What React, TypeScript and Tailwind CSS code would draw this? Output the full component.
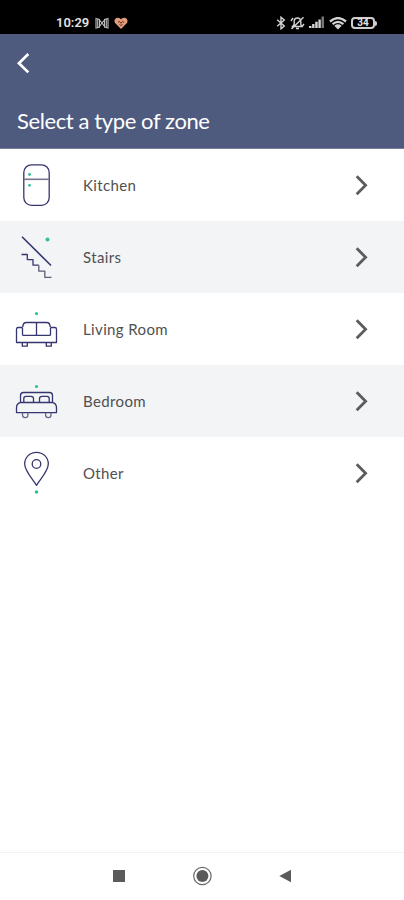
import type { ReactNode } from "react";

const NAVY = "#35356f";
const TEAL = "#2fbf9b";

function Icon({ children }: { children: ReactNode }) {
  return (
    <svg
      width="72"
      height="72"
      viewBox="0 0 72 72"
      fill="none"
      stroke={NAVY}
      strokeWidth="1.3"
      strokeLinejoin="round"
      className="shrink-0"
    >
      {children}
    </svg>
  );
}

function Dot({ x, y, r = 1.6 }: { x: number; y: number; r?: number }) {
  return <circle cx={x} cy={y} r={r} fill={TEAL} stroke="none" />;
}

const ZONES = [
  {
    name: "Kitchen",
    icon: (
      <Icon>
        <rect x="23.8" y="15.8" width="25.4" height="40.6" rx="7.8" />
        <path d="M24 30.3H49" stroke="#77778f" strokeWidth="1.6" />
        <Dot x={29.5} y={25.5} r={1.4} />
        <Dot x={29.5} y={36.3} r={1.4} />
      </Icon>
    ),
  },
  {
    name: "Stairs",
    icon: (
      <Icon>
        <path d="M22 15.7L51 44.5" strokeWidth="1.6" />
        <path d="M21.5 33.5H27.3V38.6H33V44.2H38.8" />
        <path d="M38.8 44.2V50.2H44.8V56.3H51.5" stroke="#5c5c78" />
        <Dot x={47.5} y={18.5} r={2} />
      </Icon>
    ),
  },
  {
    name: "Living Room",
    icon: (
      <Icon>
        <path d="M22.5 42.3V34.5M50.5 42.3V34.5M22.5 42.3H50.5M22.8 34C22.8 31 24 29.5 26.5 29.5H46.5C49 29.5 50.2 31 50.2 34" />
        <path d="M36.5 29.5V42.3" />
        <path d="M22.5 34.5H18.2Q16.5 34.5 16.5 36.2V49.5H56.5V36.2Q56.5 34.5 54.8 34.5H50.5" />
        <path d="M22.3 49.5V53.2H27.3V49.5M46.3 49.5V53.2H51.3V49.5" />
        <Dot x={36.5} y={20.6} />
      </Icon>
    ),
  },
  {
    name: "Bedroom",
    icon: (
      <Icon>
        <path d="M20.5 37.5V30.5Q20.5 27.5 23.5 27.5H49.5Q52.5 27.5 52.5 30.5V37.5" />
        <path d="M23.8 37.5V33.5Q23.8 31.3 26 31.3H31Q33.5 31.3 33.5 33.5V37.5M39.5 37.5V33.5Q39.5 31.3 42 31.3H47Q49.2 31.3 49.2 33.5V37.5" />
        <path d="M20 37.5H53Q56.5 38.5 56.5 43V47.6H16.5V43Q16.5 38.5 20 37.5Z" />
        <path
          d="M22.5 47.8V50Q22.5 52.6 25.2 52.6T27.9 50V47.8M45.6 47.8V50Q45.6 52.6 48.3 52.6T51 50V47.8"
          stroke="#66668a"
        />
        <Dot x={36.5} y={21.5} />
      </Icon>
    ),
  },
  {
    name: "Other",
    icon: (
      <Icon>
        <path d="M36.5 48.3C33 42.5 24.7 34 24.7 27C24.7 20.3 29.8 15.3 36.5 15.3S48.3 20.3 48.3 27C48.3 34 40 42.5 36.5 48.3Z" />
        <circle cx="36.5" cy="27" r="4.3" />
        <Dot x={36.5} y={55} r={1.8} />
      </Icon>
    ),
  },
];

function StatusBar() {
  return (
    <div className="flex h-[34px] items-start bg-black pt-[14px] text-[#e2e2e2]">
      <span className="ml-[56px] w-[34px] whitespace-nowrap font-['Roboto',sans-serif] text-[13px] font-semibold leading-[18px]">
        10:29
      </span>
      <svg width="14" height="12" viewBox="0 0 14 12" fill="none" stroke="#bdbdbd" strokeWidth="1.1" className="ml-[5px] mt-[3px]">
        <path d="M1 1.5L4.5 2.5V10L1 11ZM13 1.5L9.5 2.5V10L13 11ZM4.5 3L7 6L9.5 3M4.5 9.5L7 6L9.5 9.5M2.7 2V10.5M11.3 2V10.5" />
      </svg>
      <svg width="14" height="13" viewBox="0 0 14 13" className="ml-[5px] mt-[3px]">
        <path
          d="M7 12L1.3 6.3C-.5 4 .8 .7 3.8 .7C5.3 .7 6.3 1.5 7 2.5C7.7 1.5 8.7 .7 10.2 .7C13.2 .7 14.5 4 12.7 6.3Z"
          fill="#e29b7b"
        />
        <path d="M4 5.3L5.5 4.5L7 6.3L8.500 4.500L10 5.300M5.500 7.500L7 8.500L8.500 7.500" fill="none" stroke="#5b3429" />
      </svg>
      <svg width="10" height="14" viewBox="0 0 10 14" fill="none" stroke="#d4d4d4" strokeWidth="1.4" className="ml-[148px] mt-[2px]">
        <path d="M1.2 3.8L8.3 10L5 12.8V1.2L8.3 4L1.2 10.2" />
      </svg>
      <svg width="15" height="14" viewBox="0 0 15 14" fill="none" stroke="#d4d4d4" strokeWidth="1.4" className="ml-[4px] mt-[2px]">
        <path d="M2.5 10.5H12L10.8 8.5V5.5C10.8 3.2 9.5 2 7.5 2S4.2 3.2 4.2 5.5V8.5ZM6 12.5H9M1.5 13L13.5 1.2M1 5L3 2M14 8L12.5 10" />
      </svg>
      <svg width="15" height="12" viewBox="0 0 15 12" className="ml-[4px] mt-[2px]" fill="#d4d4d4">
        <path d="M0 10H2.500V12H0ZM3.100 8H5.500V12H3.100ZM6.200 5.800H8.700V12H6.200ZM9.400 3.500H11.800V12H9.400Z" />
        <path d="M12.500 .5H15V12H12.500Z" fill="#777" />
      </svg>
      <svg width="18" height="13" viewBox="0 0 18 13" fill="none" stroke="#d4d4d4" strokeWidth="2.3" className="ml-[5px] mt-[3px]">
        <path d="M1 4.5Q9-2.3 17 4.5M3.6 7.2Q9 2.6 14.4 7.2" />
        <path d="M5.3 8.700Q9 6 12.700 8.700L9 12.500Z" fill="#d4d4d4" stroke="none" />
      </svg>
      <div className="ml-[4px] mt-[3px] flex items-center">
        <div className="flex h-[12px] w-[24px] items-center justify-center rounded-[4px] border-2 border-[#cfcfcf] font-['Roboto',sans-serif] text-[10px] font-bold leading-none">
          34
        </div>
        <div className="h-[5px] w-[2px] rounded-r-sm bg-[#cfcfcf]" />
      </div>
    </div>
  );
}

export default function App() {
  return (
    <div className="flex h-[900px] w-[404px] flex-col overflow-hidden bg-white font-['Lato',sans-serif]">
      <StatusBar />

      {/* Header */}
      <header className="flex h-[115px] flex-col border-b border-[#77809b] bg-[#4e5b7e] pl-[17px] pt-[18px] text-white">
        <svg width="14" height="22" viewBox="0 0 14 22" fill="none" stroke="currentColor" strokeWidth="2.7">
          <path d="M11.3 2L1.9 11.2L11.3 20.400" />
        </svg>
        <h1 className="mt-[32px] whitespace-nowrap text-[22px] leading-[30px] tracking-[-0.4px]">
          Select a type of zone
        </h1>
      </header>

      {/* Zone list */}
      <ul className="flex-1">
        {ZONES.map((zone) => (
          <li key={zone.name} className="flex h-[72px] items-center even:bg-[#f3f4f6]">
            {zone.icon}
            <span className="ml-[11px] flex-1 text-[15px] tracking-[0.37px] text-[#505050]">{zone.name}</span>
            <svg width="14" height="22" viewBox="0 0 14 22" fill="none" stroke="#5c5c5c" strokeWidth="2.8" className="mr-[35px]">
              <path d="M1.7 2.3L10.6 11.3L1.7 20.3" />
            </svg>
          </li>
        ))}
      </ul>

      {/* Android navigation */}
      <nav className="flex h-[48px] items-center border-t border-[#f2f2f2] pb-[2px] pl-[113px]">
        <div className="h-[12px] w-[12px] bg-[#5b5b5b]" />
        <svg width="20" height="20" viewBox="0 0 20 20" className="ml-[67px]">
          <circle cx="10.400" cy="10" r="8.7" fill="none" stroke="#6a6a6a" strokeWidth="1.2" />
          <circle cx="10.400" cy="10" r="6" fill="#5b5b5b" />
        </svg>
        <svg width="12" height="14" viewBox="0 0 12 14" className="ml-[67px]" fill="#5b5b5b">
          <path d="M.3 7L12 .7V13.300Z" />
        </svg>
      </nav>
    </div>
  );
}
